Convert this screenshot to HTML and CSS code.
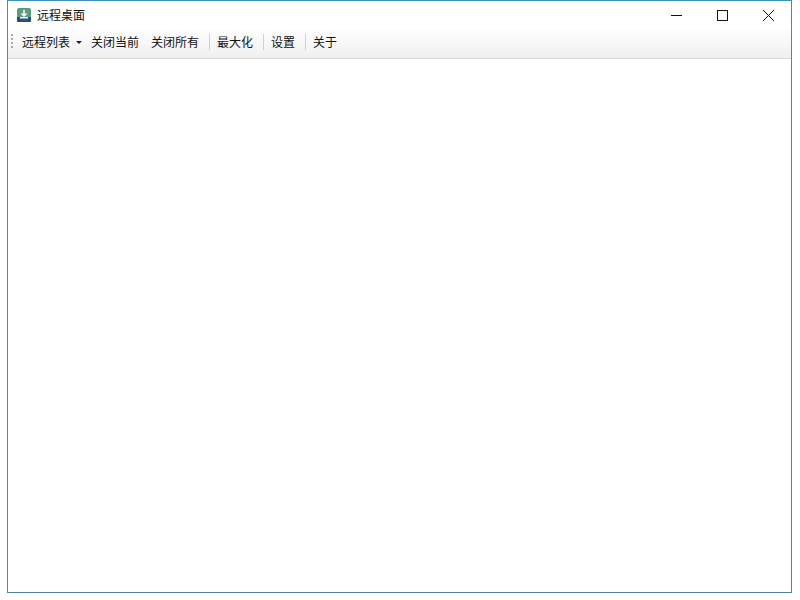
FILE: index.html
```html
<!DOCTYPE html>
<html lang="zh">
<head>
<meta charset="utf-8">
<title>远程桌面</title>
<link rel="stylesheet" href="styles.css">
</head>
<body>
<div class="window">
  <div class="titlebar">
    <svg class="app-icon" width="16" height="16" viewBox="0 0 16 16">
      <rect x="1" y="1" width="14" height="14" rx="2" fill="#5a9c80"/>
      <rect x="1" y="10" width="14" height="5" rx="1" fill="#2b4f78"/>
      <path d="M8 3v6M5.500 6.500L8 9l2.500-2.500" fill="none" stroke="#fff" stroke-width="1.500"/>
      <rect x="4" y="10" width="8" height="1.500" fill="#fff"/>
    </svg>
    <span class="title">远程桌面</span>
    <div class="controls">
      <span class="ctl"><svg width="11" height="11" viewBox="0 0 11 11"><path d="M0 5.500h11" stroke="#111" fill="none"/></svg></span>
      <span class="ctl"><svg width="11" height="11" viewBox="0 0 11 11"><rect x="0.500" y="0.500" width="10" height="10" stroke="#111" fill="none"/></svg></span>
      <span class="ctl"><svg width="11" height="11" viewBox="0 0 11 11"><path d="M0 0l11 11M11 0L0 11" stroke="#111" fill="none"/></svg></span>
    </div>
  </div>
  <div class="toolbar">
    <span class="grip"></span>
    <span class="item first">远程列表</span>
    <span class="arrow"></span>
    <span class="item close-cur">关闭当前</span>
    <span class="item close-all">关闭所有</span>
    <span class="sep"></span>
    <span class="item">最大化</span>
    <span class="sep"></span>
    <span class="item">设置</span>
    <span class="sep"></span>
    <span class="item">关于</span>
  </div>
  <div class="content"></div>
</div>
</body>
</html>
```
FILE: styles.css
```css
html, body {
  margin: 0;
  padding: 0;
  background: #fff;
  height: 100%;
  overflow: hidden;
}
.window {
  box-sizing: border-box;
  width: 785px;
  height: 593px;
  margin-left: 7px;
  border: 1px solid #3f8fc1;
  border-bottom-color: #4a7f9f;
  border-right-color: #4a87ad;
  background: #fff;
  display: flex;
  flex-direction: column;
  font-family: "Noto Sans CJK SC", "Liberation Sans", sans-serif;
  color: #111;
}
.titlebar {
  height: 29px;
  display: flex;
  align-items: center;
  padding-left: 8px;
  flex: none;
}
.app-icon {
  flex: none;
  margin-bottom: 2px;
}
.title {
  margin-left: 5px;
  margin-bottom: 2px;
  font-size: 12px;
  line-height: 16px;
}
.controls {
  margin-left: auto;
  display: flex;
  margin-bottom: 1px;
}
.ctl {
  width: 46px;
  height: 28px;
  display: flex;
  align-items: center;
  justify-content: center;
}
.toolbar {
  box-sizing: border-box;
  height: 29px;
  flex: none;
  display: flex;
  align-items: center;
  padding: 0 0 4px 3px;
  background: linear-gradient(#fdfdfd, #f0f0f0);
  border-bottom: 1px solid #d8d8d8;
  font-size: 12px;
}
.grip {
  width: 2px;
  height: 16px;
  background: repeating-linear-gradient(#aaa 0 2px, transparent 2px 4px);
}
.item {
  line-height: 16px;
  white-space: nowrap;
}
.first {
  margin-left: 9px;
}
.arrow {
  width: 0;
  height: 0;
  margin-left: 6px;
  border-left: 3px solid transparent;
  border-right: 3px solid transparent;
  border-top: 3px solid #222;
}
.close-cur {
  margin-left: 9px;
}
.close-all {
  margin-left: 12px;
}
.sep {
  width: 1px;
  height: 16px;
  background: #cfcfcf;
  margin: 0 7px 0 10px;
}
.content {
  flex: 1;
  background: #fff;
}
```
